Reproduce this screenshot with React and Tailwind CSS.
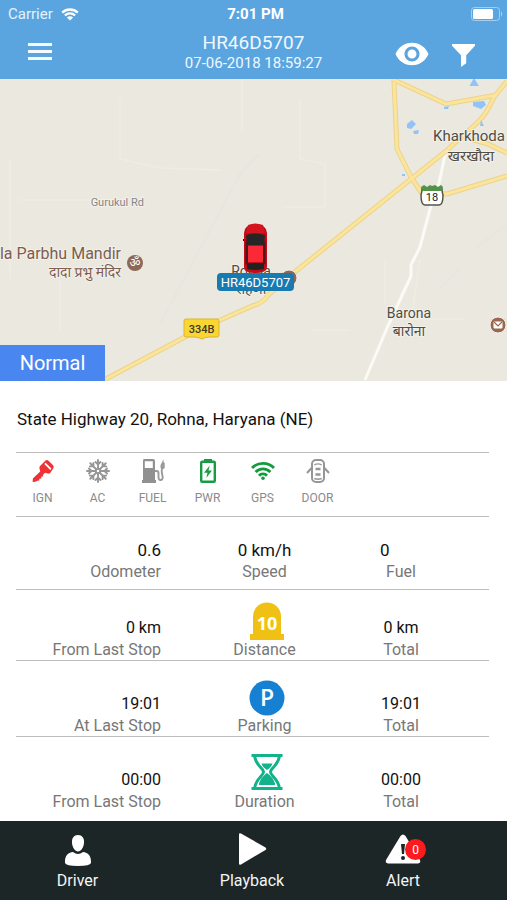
import React from "react";
import { MdVisibility } from "react-icons/md";

/* ---------- status bar and header ---------- */

function WifiArcs({ className }) {
  return (
    <svg viewBox="0 0 24 18" className={className} fill="none" stroke="currentColor" strokeWidth="2.9" aria-hidden="true">
      <path d="M1 6A15.4 15.4 0 0 1 23 6" />
      <path d="M4.600 10A10.300 10.300 0 0 1 19.400 10" />
      <path d="M8 13.700A5.300 5.300 0 0 1 16 13.700" />
      <circle cx="12" cy="16.300" r="1.800" fill="currentColor" stroke="none" />
    </svg>
  );
}

function StatusWifi() {
  return (
    <svg viewBox="0 0 18 13" className="h-[13px] w-[18px]" fill="none" stroke="currentColor" strokeWidth="2.3" aria-hidden="true">
      <path d="M1.2 4.6A11.3 11.3 0 0 1 16.8 4.6" />
      <path d="M3.9 7.5A7.4 7.4 0 0 1 14.1 7.5" />
      <path d="M9 12.6 5.9 9.5A4.4 4.4 0 0 1 12.1 9.5Z" fill="currentColor" stroke="none" />
    </svg>
  );
}

function Battery() {
  return (
    <svg viewBox="0 0 32 14" className="h-[14px] w-8" aria-hidden="true">
      <rect x="0.5" y="0.5" width="28" height="13" rx="3" fill="none" stroke="#a5cff0" />
      <rect x="2" y="2" width="20" height="10" rx="1.5" fill="#fff" />
      <path d="M30 4.5c1.6.6 1.6 4.4 0 5z" fill="#a5cff0" />
    </svg>
  );
}

function Header() {
  return (
    <header className="bg-[#5aa5e0] text-white">
      <div className="grid h-7 grid-cols-[1fr_auto_1fr] items-center pl-2 pr-1 text-[15px]">
        <div className="flex items-center gap-2">
          <span className="text-[#e4f2fc]">Carrier</span>
          <StatusWifi />
        </div>
        <span className="text-center font-bold">7:01 PM</span>
        <span className="flex justify-end">
          <Battery />
        </span>
      </div>
      <div className="grid h-[51px] grid-cols-[1fr_auto_1fr] items-center">
        <button type="button" aria-label="Menu" className="ml-7 w-6 pb-1">
          <svg viewBox="0 0 24 18" className="h-[18px] w-6" fill="#f4faff" aria-hidden="true">
            <path d="M0 0h24v3H0zM0 7h24v3H0zM0 14h24v3H0z" />
          </svg>
        </button>
        <div className="pb-1 text-center text-[#f0f8ff]">
          <h1 className="text-[19px] leading-[22px]">HR46D5707</h1>
          <p className="text-[15px] leading-[18px]">07-06-2018 18:59:27</p>
        </div>
        <div className="flex items-center justify-end gap-[22px] pr-8">
          <button type="button" aria-label="Show vehicle">
            <MdVisibility size={36} />
          </button>
          <button type="button" aria-label="Filter">
            <svg viewBox="0 0 23 23" className="mt-1 size-[23px]" fill="#fff" aria-hidden="true">
              <path d="M0 0h23v1.8L14.2 11.3v8L9 23V11.3L0 1.8z" />
            </svg>
          </button>
        </div>
      </div>
    </header>
  );
}

/* ---------- map ---------- */

const ROADS = [
  "M104 301 L200 250 L252 227 Q264 224 268 216 L296 192 L446 72 L478 43 Q486 36 494 18 L507 2",
  "M392 0 L446 25 L497 16",
  "M394 3 L397 70 L411 98 L421 113 L447 115 L507 97",
  "M470 60 L488 65 L507 74",
];

function Map() {
  return (
    <section aria-label="Map" className="relative h-[302px] overflow-hidden bg-[#ebe9df]">
      <svg viewBox="0 0 507 302" preserveAspectRatio="xMidYMid slice" className="h-full w-full">
        <g fill="none" stroke="#eeece3" strokeWidth="1.5">
          <path d="M120 20v60l40 9 60 2M10 80v120M20 121h70M242 0v52M300 20v60l25 5v43M282 128h43M385 180v45M410 250l10-70" />
          <path d="M60 201v50M310 251h40M400 240h65" />
        </g>
        <path d="M160 245 240 95l20-20M440 210l20-20M475 170l30-24" fill="none" stroke="#e8e7df" strokeWidth="3" />
        <path d="M446 72 439 104 430 130 420 168 411 186v11l-24 52-22 52" fill="none" stroke="#fbfaf6" strokeWidth="3" strokeLinejoin="round" />
        <g fill="none" strokeLinejoin="round">
          {ROADS.map((d) => <path key={d} d={d} stroke="#ecd38a" strokeWidth="5" />)}
          {ROADS.map((d) => <path key={d} d={d} stroke="#fbe49b" strokeWidth="3" />)}
        </g>
        <g fill="#8fc3fa">
          <path d="M407 45l5-4 4 4-5 5-4-1zM413 52l6-1-1 4-4 0zM470 6l4-7 5 8-9 0zM473 23l11-1 2 4-5 4-8-3zM444 28l5-1-1 3-4 0zM480 47l1-6 3 6zM470 54l3-3v4zM402 95h3v2h-3z" />
        </g>

        {/* road shields */}
        <path d="M186 240h31q2 0 2 2v14q0 2-2 2h-7q-5 0-8 2-4-2-8-2h-8q-2 0-2-2v-14q0-2 2-2z" fill="#fbd633" stroke="#d9b530" />
        <text x="201.500" y="254" textAnchor="middle" fontSize="11" fontWeight="500" fill="#3d3a2a">334B</text>
        <path d="M422 110h20q0 3 1 6 0 10-4 10h-14q-4 0-4-10 1-3 1-6z" fill="#fff" stroke="#54544f" strokeWidth="1.500" />
        <path d="M421 108l3-2 3 2 3-2 2 1 3-1 3 2 3-2 2 2-1 4h-20z" fill="#53924a" />
        <text x="432" y="122" textAnchor="middle" fontSize="11" fill="#222">18</text>

        {/* places */}
        <g stroke="#f3f1ea" strokeWidth="2" strokeLinejoin="round" paintOrder="stroke" fill="#504d45">
          <text x="144" y="127" textAnchor="end" fontSize="11" fill="#85858a">Gurukul Rd</text>
          <text x="121" y="180" textAnchor="end" fontSize="16" fill="#7d5d50">la Parbhu Mandir</text>
          <text x="121" y="198" textAnchor="end" fontSize="14" fill="#7d5d50">दादा प्रभु मंदिर</text>
          <text x="433" y="62" fontSize="15">Kharkhoda</text>
          <text x="471" y="82" textAnchor="middle" fontSize="15">खरखौदा</text>
          <text x="409" y="239" textAnchor="middle" fontSize="14">Barona</text>
          <text x="409" y="257" textAnchor="middle" fontSize="14">बारोना</text>
          <text x="251" y="197" textAnchor="middle" fontSize="14">Rohna</text>
          <text x="251" y="215" textAnchor="middle" fontSize="14">रोहणा</text>
        </g>
        <circle cx="135" cy="184" r="8" fill="#8e6757" />
        <text x="135" y="188" textAnchor="middle" fontSize="12" fill="#fff">ॐ</text>
        <circle cx="289" cy="199" r="8" fill="#8e6757" stroke="#f4eee8" />
        <circle cx="498" cy="246" r="8" fill="#9a684f" stroke="#f8f4ef" />
        <rect x="493.500" y="242.500" width="9" height="7" rx="1" fill="#fff" />
        <path d="M494 243l4 4 4-4" fill="none" stroke="#9a684f" strokeWidth="1.200" />

        {/* tracked vehicle */}
        <g>
          <path d="M243 161h24" stroke="#3b1515" strokeWidth="2" />
          <path d="M244 154q0-8 11-9 12 1 12 9v34q0 6-12 6-11 0-11-6z" fill="#c00d18" />
          <path d="M248 146q7-3 15 0l2 8h-19z" fill="#d5141d" />
          <path d="M246 156q9-3 19 0l-1 10h-17z" fill="#262626" />
          <path d="M245.500 160l2.500 7v16l-2.500 3zM265.500 160l-2.500 7v16l2.500 3z" fill="#4a171b" />
          <path d="M248 167h15v16h-15z" fill="#fb2835" />
          <path d="M247 184h17v6q-8 2-17 0z" fill="#222" />
          <rect x="217" y="194" width="77" height="18" rx="4" fill="#177bb2" />
          <text x="255.500" y="208" textAnchor="middle" fontSize="13" fill="#fff">HR46D5707</text>
        </g>
      </svg>
      <div className="absolute bottom-0 left-0 flex h-9 w-[105px] items-center justify-center bg-[#4a86f0] text-xl text-white">
        Normal
      </div>
    </section>
  );
}

/* ---------- sensor icons ---------- */

function KeyIcon() {
  return (
    <svg viewBox="0 0 24 24" className="size-6" aria-hidden="true">
      <path fill="#ee3337" fillRule="evenodd" d="M14.500 1.500q1.500-.9 3 .2l4.600 4.600q1 1.200.4 2.600l-3.300 5q-.8 1-2.200.7l-3-.8-2 2 .2 1.600-1.800.2-.1 1.900-1.900.2-.2 1.900-1.700.1-2.100 1-2.800.2.3-3.300 7.300-7.100-.8-3.400q-.2-1.300.9-2.300zM14.600 3.800l-1.300 1.200 6 6.100 1.100-1.700z" />
    </svg>
  );
}

function SnowIcon() {
  return (
    <svg viewBox="0 0 24 24" className="size-6" fill="none" stroke="#969696" strokeWidth="1.900" strokeLinecap="round" aria-hidden="true">
      {[0, 45, 90, 135, 180, 225, 270, 315].map((angle) => (
        <path key={angle} transform={`rotate(${angle} 12 12)`} d="M12 9.500V1M9.500 3 12 5.500 14.500 3" />
      ))}
      <circle cx="12" cy="12" r="2.200" />
    </svg>
  );
}

function PumpIcon() {
  return (
    <svg viewBox="0 0 24 24" className="size-6" aria-hidden="true">
      <path fill="#919191" fillRule="evenodd" d="M3 0h9q2 0 2 2v19h1v3H1v-3h1V2q0-2 1-2zm.8 2.200V9h8V2.200z" />
      <path d="M14 12h1.500q2 0 2 2v4q0 3.500 2.500 3 2.500-.5 1.300-5-1.300-5 .2-7" fill="none" stroke="#999" strokeWidth="1.900" />
      <path d="M22.500 0v3l1.200 1v5q-2 1.800-4.200 0-.8-3 1.200-5z" fill="#999" />
    </svg>
  );
}

function PowerIcon() {
  return (
    <svg viewBox="0 0 24 24" className="size-6" aria-hidden="true">
      <path d="M8 0h8v3H8z" fill="#189c43" />
      <rect x="5.200" y="2.800" width="13.600" height="20" rx="1" fill="none" stroke="#189c43" strokeWidth="2.400" />
      <path d="M13.700 6.500 8 13.700h3.500l-1.200 5.200 5.700-7.500h-3.500z" fill="#189c43" />
    </svg>
  );
}

function DoorIcon() {
  return (
    <svg viewBox="0 0 24 24" className="size-6" fill="none" stroke="#969696" strokeWidth="2" aria-hidden="true">
      <rect x="6" y="1" width="12" height="22" rx="4" />
      <path d="M8.300 6q3.700-2.200 7.400 0M8.300 19.500q3.700 1.500 7.400 0" strokeWidth="1.400" />
      <path d="M6 8.500 1 14M18 8.500l5 5.500" />
      <path d="M9.500 10h5M9.500 15.500h5" strokeWidth="2.600" />
    </svg>
  );
}

const SENSORS = [
  { label: "IGN", icon: <KeyIcon /> },
  { label: "AC", icon: <SnowIcon /> },
  { label: "FUEL", icon: <PumpIcon /> },
  { label: "PWR", icon: <PowerIcon /> },
  { label: "GPS", icon: <WifiArcs className="h-6 w-6 text-[#129b3d]" /> },
  { label: "DOOR", icon: <DoorIcon /> },
];

/* ---------- trip statistics ---------- */

function DistanceIcon() {
  return (
    <svg viewBox="0 0 36 38" className="h-[38px] w-9" aria-hidden="true">
      <path d="M4 32V14.500a14 14 0 0 1 28 0V32h3v6H1v-6z" fill="#f0c114" />
      <text x="18" y="28" textAnchor="middle" fontSize="18" fontWeight="700" fill="#fff" className="font-['Open_Sans',sans-serif]">10</text>
    </svg>
  );
}

function ParkingIcon() {
  return (
    <svg viewBox="0 0 36 36" className="size-9" aria-hidden="true">
      <circle cx="18" cy="18" r="17.500" fill="#1681d2" />
      <text x="18" y="26" textAnchor="middle" fontSize="23" fontWeight="600" fill="#fff" className="font-['Open_Sans',sans-serif]">P</text>
    </svg>
  );
}

function HourglassIcon() {
  return (
    <svg viewBox="0 0 36 38" className="h-[38px] w-9" aria-hidden="true">
      <path d="M2.500 1.500h31M2.500 34.500h31M5.500 2C7 12 14.500 14 14.500 18S7 24 5.500 34.500M30.500 2C29 12 21.500 14 21.500 18S29 24 30.500 34.500" fill="none" stroke="#12b38b" strokeWidth="3" />
      <path d="M12.500 9.500h11q-1 3.500-5.500 6.500-4.500-3-5.500-6.500zM18 19q6 4 8 10.500V31H10v-1.500Q12 23 18 19z" fill="#12b38b" />
    </svg>
  );
}

function Stat({ value, label, className, large }) {
  return (
    <div className={`flex flex-col ${className}`}>
      <span className={`leading-6 text-[#111] ${large ? "text-[17px]" : "text-base"}`}>{value}</span>
      <span className="text-base leading-5 text-[#777]">{label}</span>
    </div>
  );
}

const COLS = "grid grid-cols-[161fr_207fr_66fr_73fr]";

function TripRow({ left, icon, label, right, height, last }) {
  return (
    <div className={`relative ${height}`}>
      <div className={`${COLS} h-full items-end pb-px`}>
        <Stat value={left[0]} label={left[1]} className="items-end" />
        <div className="flex flex-col items-center">
          <span className="pl-1">{icon}</span>
          <span className="text-base leading-5 text-[#777]">{label}</span>
        </div>
        <Stat value={right[0]} label={right[1]} className="items-center" />
      </div>
      {!last && <Rule />}
    </div>
  );
}

function Rule() {
  return <hr className="absolute bottom-0 left-4 right-[18px] border-t border-[#bdbdbd]" />;
}

function Details() {
  return (
    <main className="flex-1">
      <div className="relative flex h-[72px] items-center pl-[17px] pt-[6px]">
        <p className="text-[17px] text-[#111]">State Highway 20, Rohna, Haryana (NE)</p>
        <Rule />
      </div>
      <ul className="relative flex h-16 pl-[15px] pt-[6px]">
        {SENSORS.map((s) => (
          <li key={s.label} className="flex w-[55px] flex-col items-center gap-[7px]">
            {s.icon}
            <span className="text-xs leading-4 text-[#8b8b8b]">{s.label}</span>
          </li>
        ))}
        <Rule />
      </ul>
      <div className="relative h-[73px]">
        <div className={`${COLS} h-full items-end pb-2`}>
          <Stat large value="0.6" label="Odometer" className="items-end" />
          <Stat large value="0 km/h" label="Speed" className="items-center" />
          <div className="flex flex-col px-3">
            <span className="text-[17px] leading-6 text-[#111]">0</span>
            <span className="text-center text-base leading-5 text-[#777]">Fuel</span>
          </div>
        </div>
        <Rule />
      </div>
      <TripRow left={["0 km", "From Last Stop"]} icon={<DistanceIcon />} label="Distance" right={["0 km", "Total"]} height="h-[71px]" />
      <TripRow left={["19:01", "At Last Stop"]} icon={<ParkingIcon />} label="Parking" right={["19:01", "Total"]} height="h-[76px]" />
      <TripRow left={["00:00", "From Last Stop"]} icon={<HourglassIcon />} label="Duration" right={["00:00", "Total"]} height="h-[76px]" last />
    </main>
  );
}

/* ---------- bottom bar ---------- */

function Tab({ label, children }) {
  return (
    <button type="button" className="flex flex-col items-center gap-1 pt-3">
      {children}
      <span className="text-base leading-5">{label}</span>
    </button>
  );
}

function BottomBar() {
  return (
    <nav className="grid h-[79px] grid-cols-[155fr_194fr_108fr_50fr] items-start bg-[#1c2627] text-[#f3f5f5]">
      <Tab label="Driver">
        <svg viewBox="0 0 30 34" className="h-[34px] w-[30px]" fill="#fff" aria-hidden="true">
          <path d="M15 2c4 0 6.500 3 6 8-.5 4.500-3 8.500-6 8.500S9.500 14.500 9 10c-.5-5 2-8 6-8z" />
          <path d="M2 30c-.5-7 3-10.500 8-11q2.500 2 5 2t5-2c5 .5 8.500 4 8 11q-1 3-13 3T2 30z" />
        </svg>
      </Tab>
      <Tab label="Playback">
        <svg viewBox="0 0 30 34" className="h-[34px] w-[30px]" fill="#fff" aria-hidden="true">
          <path d="M2 1.500q0-2 2-1L28.500 14.500q1.500 1.500 0 2.500L4 31.500q-2 1-2-1z" />
        </svg>
      </Tab>
      <Tab label="Alert">
        <span className="relative">
          <svg viewBox="0 0 36 34" className="h-[34px] w-9" aria-hidden="true">
            <path d="M15.500 3q2.500-3 5 0L35 27q1 3-2 3.500H3Q0 30 1 27z" fill="#fff" />
            <path d="M16 11h4l-1 10h-2z" fill="#1c2627" />
            <circle cx="18" cy="25" r="2" fill="#1c2627" />
          </svg>
          <span className="absolute -right-[5px] top-[6px] flex size-[21px] items-center justify-center rounded-full bg-[#fb1b1e] text-xs text-white">
            0
          </span>
        </span>
      </Tab>
    </nav>
  );
}

export default function App() {
  return (
    <div className="flex min-h-screen flex-col bg-white font-['Roboto','Noto_Sans_Devanagari','Noto_Sans',sans-serif]">
      <Header />
      <Map />
      <Details />
      <BottomBar />
    </div>
  );
}
